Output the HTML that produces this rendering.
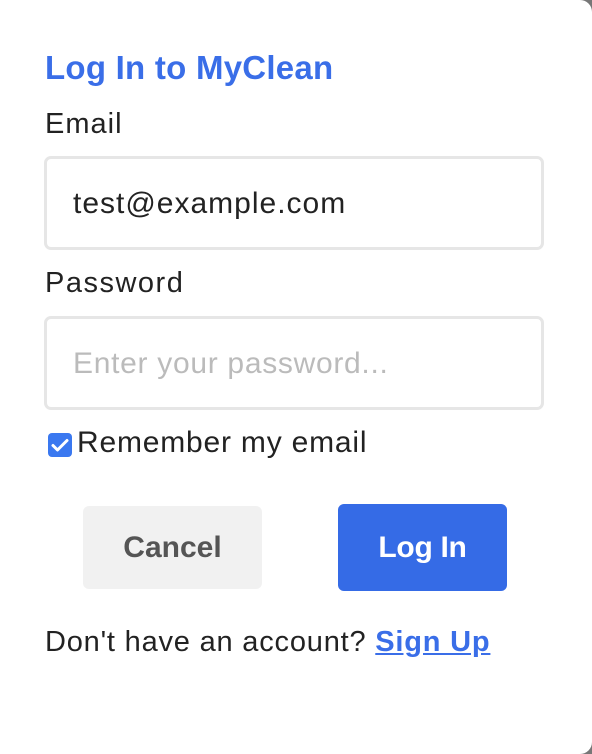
<!DOCTYPE html>
<html><head><style>
body{margin:0;width:592px;height:754px;background:#777;font-family:"Liberation Sans",Arial,sans-serif;overflow:hidden;position:relative}
.card{position:absolute;left:-20px;top:0;width:612px;height:754px;background:#fff;border-radius:12px}
.a{position:absolute;white-space:nowrap}
.inp{position:absolute;left:44px;width:494px;height:88px;border:3px solid #e6e6e6;border-radius:7px;box-sizing:content-box}
.btn{position:absolute;border-radius:6px;font-weight:bold;font-size:30px;text-align:center}
</style></head><body>
<div class="card"></div>
<div class="a" style="left:45px;top:49px;font-size:33px;font-weight:bold;color:#3a6ee8;letter-spacing:0.25px">Log In to MyClean</div>
<div class="a" style="left:45px;top:108px;font-size:29px;color:#222;letter-spacing:1px">Email</div>
<div class="inp" style="top:156px"></div>
<div class="a" style="left:73px;top:187px;font-size:30px;color:#222;letter-spacing:1px">test@example.com</div>
<div class="a" style="left:45px;top:267px;font-size:29px;color:#222;letter-spacing:1.5px">Password</div>
<div class="inp" style="top:316px"></div>
<div class="a" style="left:73px;top:347px;font-size:30px;color:#bbb;letter-spacing:0.7px">Enter your password...</div>
<svg class="a" style="left:48px;top:433px" width="24" height="24" viewBox="0 0 24 24"><rect x="0" y="0" width="24" height="24" rx="4" fill="#3a78f0"/><path d="M5 12.5l4.5 4.5L19 7.5" stroke="#fff" stroke-width="3" fill="none" stroke-linecap="round" stroke-linejoin="round"/></svg>
<div class="a" style="left:77px;top:426px;font-size:30px;color:#222;letter-spacing:0.8px">Remember my email</div>
<div class="btn" style="left:83px;top:506px;width:179px;height:83px;line-height:83px;background:#f1f1f1;color:#555">Cancel</div>
<div class="btn" style="left:338px;top:504px;width:169px;height:87px;line-height:87px;background:#356be6;color:#fff;letter-spacing:-0.3px">Log In</div>
<div class="a" style="left:45px;top:626px;font-size:29px;color:#222;letter-spacing:0.8px">Don't have an account? <span style="color:#3a6ee8;font-weight:bold;text-decoration:underline">Sign Up</span></div>
</body></html>
